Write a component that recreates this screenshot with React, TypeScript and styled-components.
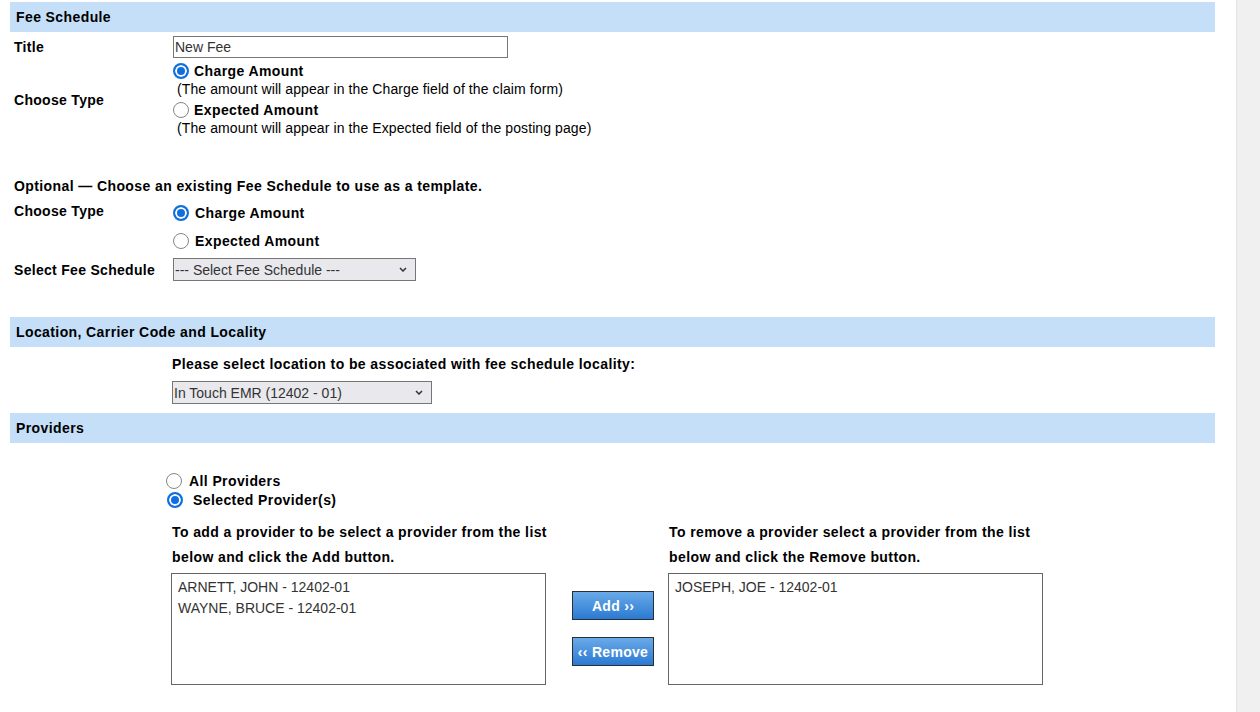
import React from 'react';
import styled, { createGlobalStyle } from 'styled-components';

const GlobalStyle = createGlobalStyle`
  html, body {
    margin: 0;
    padding: 0;
    background: #fff;
  }
  body {
    font-family: "Liberation Sans", Arial, sans-serif;
    font-size: 14px;
    color: #000;
  }
`;

const Page = styled.div`
  display: flex;
  width: 1260px;
  height: 712px;
  overflow: hidden;
`;

const Main = styled.div`
  flex: 1;
  padding: 2px 21px 0 10px;
`;

const ScrollStrip = styled.div`
  width: 23px;
  background: #f0f0f0;
  border-left: 1px solid #e4e4e4;
`;

const SectionBar = styled.div<{ $mt?: number }>`
  height: 30px;
  margin-top: ${(p) => p.$mt ?? 0}px;
  padding-left: 6px;
  display: flex;
  align-items: center;
  background: #c4dff7;
  font-weight: bold;
  letter-spacing: 0.4px;
`;

const FormRow = styled.div<{ $mt?: number; $align?: string }>`
  display: grid;
  grid-template-columns: 159px 1fr;
  padding-left: 4px;
  margin-top: ${(p) => p.$mt ?? 0}px;
  align-items: ${(p) => p.$align ?? 'center'};
`;

const Label = styled.div<{ $pt?: number }>`
  font-weight: bold;
  letter-spacing: 0.3px;
  line-height: 18px;
  padding-top: ${(p) => p.$pt ?? 0}px;
`;

const TextInput = styled.input`
  box-sizing: border-box;
  width: 335px;
  height: 22px;
  border: 1px solid #767676;
  padding: 0 1px;
  font-family: inherit;
  font-size: 14px;
  color: #333;
  outline: none;
`;

const Options = styled.div`
  display: flex;
  flex-direction: column;
`;

const RadioRow = styled.div<{ $h?: number; $mt?: number; $gap?: number; $pl?: number }>`
  display: flex;
  align-items: center;
  height: ${(p) => p.$h ?? 18}px;
  margin-top: ${(p) => p.$mt ?? 0}px;
  padding-left: ${(p) => p.$pl ?? 0}px;
  gap: ${(p) => p.$gap ?? 5}px;
  font-weight: bold;
  letter-spacing: 0.4px;
  line-height: 18px;
`;

const RadioMark = styled.span<{ $checked?: boolean }>`
  box-sizing: border-box;
  flex: none;
  width: 16px;
  height: 16px;
  border-radius: 50%;
  border: ${(p) => (p.$checked ? '2px solid #0f6fde' : '1.5px solid #858585')};
  background: ${(p) => (p.$checked ? '#0f6fde' : '#fff')};
  box-shadow: ${(p) => (p.$checked ? 'inset 0 0 0 2px #fff' : 'none')};
`;

const Note = styled.div`
  line-height: 18px;
  padding-left: 4px;
  letter-spacing: 0.1px;
`;

const Plain = styled.div<{ $mt?: number; $pl?: number }>`
  font-weight: bold;
  letter-spacing: 0.4px;
  line-height: 18px;
  margin-top: ${(p) => p.$mt ?? 0}px;
  padding-left: ${(p) => p.$pl ?? 0}px;
`;

const SelectBox = styled.div<{ $w: number; $mt?: number; $ml?: number }>`
  box-sizing: border-box;
  width: ${(p) => p.$w}px;
  height: 23px;
  margin-top: ${(p) => p.$mt ?? 0}px;
  margin-left: ${(p) => p.$ml ?? 0}px;
  border: 1px solid #767676;
  background: #e9e9ed;
  display: flex;
  align-items: center;
  justify-content: space-between;
  padding: 0 8px 0 1px;
  color: #333;
`;

const ProvidersBlock = styled.div`
  margin-top: 29px;
  padding-left: 156px;
`;

const Transfer = styled.div`
  display: flex;
  align-items: flex-start;
  margin-top: 11px;
  padding-left: 161px;
`;

const TransferCol = styled.div`
  width: 375px;
  display: flex;
  flex-direction: column;
`;

const ColHeading = styled.div`
  font-weight: bold;
  letter-spacing: 0.4px;
  line-height: 25px;
  padding-left: 1px;
  white-space: nowrap;
`;

const ListBox = styled.div`
  box-sizing: border-box;
  height: 112px;
  margin-top: 3px;
  border: 1px solid #666;
  padding: 3px 6px;
  color: #333;
  line-height: 21px;
`;

const ButtonCol = styled.div`
  display: flex;
  flex-direction: column;
  gap: 17px;
  margin: 71px 14px 0 26px;
`;

const ActionButton = styled.button`
  box-sizing: border-box;
  width: 82px;
  height: 29px;
  border: 1px solid #2a2f36;
  background: linear-gradient(#6aaae8, #2a7ad2);
  color: #fff;
  font-family: inherit;
  font-weight: bold;
  font-size: 14px;
  letter-spacing: 0.3px;
  padding: 0;
`;

const Chevron = () => (
  <svg width="8" height="5" viewBox="0 0 8 5">
    <path d="M1 1l3 3 3-3" fill="none" stroke="#333" strokeWidth="1.5" />
  </svg>
);

export default function App() {
  return (
    <Page>
      <GlobalStyle />
      <Main>
        <SectionBar>Fee Schedule</SectionBar>

        <FormRow $mt={4}>
          <Label>Title</Label>
          <TextInput defaultValue="New Fee" />
        </FormRow>

        <FormRow $mt={4}>
          <Label>Choose Type</Label>
          <Options>
            <RadioRow>
              <RadioMark $checked />
              Charge Amount
            </RadioRow>
            <Note>(The amount will appear in the Charge field of the claim form)</Note>
            <RadioRow $mt={3}>
              <RadioMark />
              Expected Amount
            </RadioRow>
            <Note>(The amount will appear in the Expected field of the posting page)</Note>
          </Options>
        </FormRow>

        <Plain $mt={40} $pl={4}>
          Optional — Choose an existing Fee Schedule to use as a template.
        </Plain>

        <FormRow $mt={4} $align="start">
          <Label $pt={3}>Choose Type</Label>
          <Options>
            <RadioRow $h={28} $gap={6}>
              <RadioMark $checked />
              Charge Amount
            </RadioRow>
            <RadioRow $h={28} $gap={6}>
              <RadioMark />
              Expected Amount
            </RadioRow>
          </Options>
        </FormRow>

        <FormRow $mt={3}>
          <Label>Select Fee Schedule</Label>
          <SelectBox $w={243}>
            --- Select Fee Schedule ---
            <Chevron />
          </SelectBox>
        </FormRow>

        <SectionBar $mt={36}>Location, Carrier Code and Locality</SectionBar>
        <Plain $mt={8} $pl={162}>
          Please select location to be associated with fee schedule locality:
        </Plain>
        <SelectBox $w={260} $mt={8} $ml={162}>
          In Touch EMR (12402 - 01)
          <Chevron />
        </SelectBox>

        <SectionBar $mt={9}>Providers</SectionBar>
        <ProvidersBlock>
          <RadioRow $gap={7}>
            <RadioMark />
            All Providers
          </RadioRow>
          <RadioRow $gap={10} $pl={1} $mt={1}>
            <RadioMark $checked />
            Selected Provider(s)
          </RadioRow>
        </ProvidersBlock>

        <Transfer>
          <TransferCol>
            <ColHeading>
              To add a provider to be select a provider from the list
              <br />
              below and click the Add button.
            </ColHeading>
            <ListBox>
              <div>ARNETT, JOHN - 12402-01</div>
              <div>WAYNE, BRUCE - 12402-01</div>
            </ListBox>
          </TransferCol>
          <ButtonCol>
            <ActionButton>Add ››</ActionButton>
            <ActionButton>‹‹ Remove</ActionButton>
          </ButtonCol>
          <TransferCol>
            <ColHeading>
              To remove a provider select a provider from the list
              <br />
              below and click the Remove button.
            </ColHeading>
            <ListBox>
              <div>JOSEPH, JOE - 12402-01</div>
            </ListBox>
          </TransferCol>
        </Transfer>
      </Main>
      <ScrollStrip />
    </Page>
  );
}
